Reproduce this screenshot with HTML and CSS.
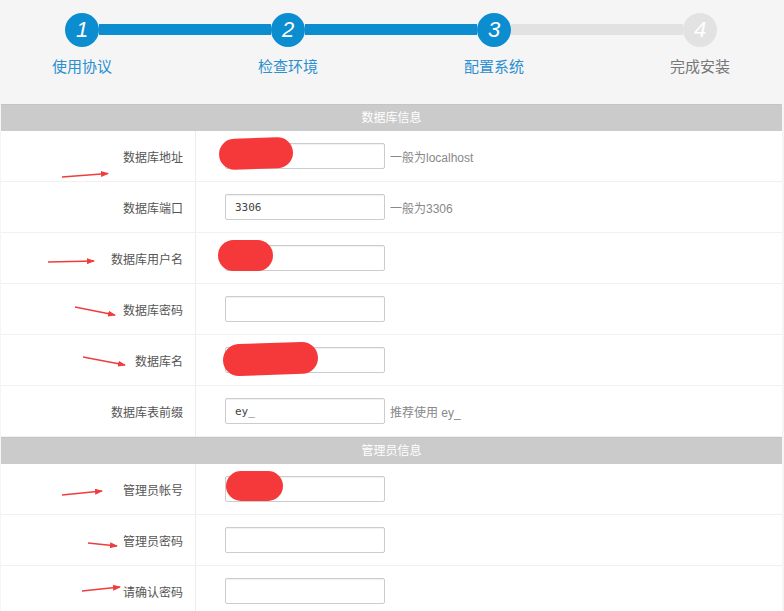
FILE: index.html
```html
<!DOCTYPE html>
<html lang="zh-CN">
<head>
    <meta charset="UTF-8">
    <meta name="viewport" content="width=device-width, initial-scale=1.0">
    <title>安装向导 - 配置系统</title>
    <link rel="stylesheet" href="styles.css">
</head>
<body>
<div class="page">

    <!-- install steps -->
    <div class="steps">
        <div class="step done">
            <span class="circle">1</span>
            <span class="step-label">使用协议</span>
        </div>
        <span class="bar done"></span>
        <div class="step done">
            <span class="circle">2</span>
            <span class="step-label">检查环境</span>
        </div>
        <span class="bar done"></span>
        <div class="step done">
            <span class="circle">3</span>
            <span class="step-label">配置系统</span>
        </div>
        <span class="bar"></span>
        <div class="step">
            <span class="circle">4</span>
            <span class="step-label">完成安装</span>
        </div>
    </div>

    <form class="setup">
        <div class="section">数据库信息</div>
        <div class="row">
            <label class="label" for="dbhost">数据库地址</label>
            <div class="field"><input class="text" type="text" id="dbhost"><span class="hint">一般为localhost</span></div>
        </div>
        <div class="row">
            <label class="label" for="dbport">数据库端口</label>
            <div class="field"><input class="text" type="text" id="dbport" value="3306"><span class="hint">一般为3306</span></div>
        </div>
        <div class="row">
            <label class="label" for="dbuser">数据库用户名</label>
            <div class="field"><input class="text" type="text" id="dbuser"></div>
        </div>
        <div class="row">
            <label class="label" for="dbpw">数据库密码</label>
            <div class="field"><input class="text" type="password" id="dbpw"></div>
        </div>
        <div class="row">
            <label class="label" for="dbname">数据库名</label>
            <div class="field"><input class="text" type="text" id="dbname"></div>
        </div>
        <div class="row">
            <label class="label" for="dbprefix">数据库表前缀</label>
            <div class="field"><input class="text" type="text" id="dbprefix" value="ey_"><span class="hint">推荐使用 ey_</span></div>
        </div>

        <div class="section">管理员信息</div>
        <div class="row">
            <label class="label" for="admin">管理员帐号</label>
            <div class="field"><input class="text" type="text" id="admin"></div>
        </div>
        <div class="row">
            <label class="label" for="adminpw">管理员密码</label>
            <div class="field"><input class="text" type="password" id="adminpw"></div>
        </div>
        <div class="row">
            <label class="label" for="adminpw2">请确认密码</label>
            <div class="field"><input class="text" type="password" id="adminpw2"></div>
        </div>
    </form>

    <!-- red marks drawn over the screenshot -->
    <svg class="marks" width="784" height="611" viewBox="0 0 784 611">
        <defs>
            <marker id="head" markerWidth="8" markerHeight="6" refX="7" refY="3" orient="auto" markerUnits="userSpaceOnUse">
                <path d="M0,0 L8,3 L0,6 Z" fill="#f03c3c"/>
            </marker>
        </defs>
        <g fill="#f5393a">
            <rect x="219" y="138" width="74" height="31" rx="15.5" transform="rotate(-2 256 153)"/>
            <rect x="218" y="240" width="55" height="31" rx="15.5"/>
            <rect x="223" y="343" width="95" height="32" rx="16" transform="rotate(-2 270 359)"/>
            <rect x="226" y="471" width="57" height="30" rx="15"/>
        </g>
        <g stroke="#f03c3c" stroke-width="1.4" marker-end="url(#head)">
            <line x1="62" y1="177" x2="108" y2="173.5"/>
            <line x1="48" y1="262" x2="94" y2="261"/>
            <line x1="75" y1="307" x2="115" y2="315"/>
            <line x1="83" y1="357" x2="125" y2="365"/>
            <line x1="62" y1="495" x2="102" y2="491"/>
            <line x1="88" y1="543" x2="117" y2="546"/>
            <line x1="82" y1="591" x2="120" y2="587"/>
        </g>
    </svg>

</div>
</body>
</html>
```

FILE: styles.css
```css
body {
    margin: 0;
    background-color: #f5f5f5;
    font-family: "Liberation Sans", "Noto Sans CJK SC", sans-serif;
    color: #333;
}

.page {
    position: relative;
    width: 784px;
    height: 611px;
    overflow: hidden;
}

/* steps */
.steps {
    display: flex;
    align-items: flex-start;
    height: 104px;
    box-sizing: border-box;
    padding: 13px 67px 0 65px;
}

.step {
    display: flex;
    flex-direction: column;
    align-items: center;
    width: 34px;
    color: #777;
}

.step.done {
    color: #2b8fd0;
}

.circle {
    width: 34px;
    height: 34px;
    border-radius: 50%;
    background-color: #e2e2e2;
    color: #fff;
    font: italic 22px/34px "Liberation Sans", sans-serif;
    text-align: center;
}

.step.done .circle {
    background-color: #0b8dd0;
}

.step-label {
    margin-top: 10px;
    font-size: 15px;
    line-height: 20px;
    white-space: nowrap;
}

.bar {
    flex: 1;
    height: 11px;
    margin-top: 11px;
    background-color: #e2e2e2;
}

.bar.done {
    background-color: #0b8dd0;
}

/* form */
.setup {
    margin: 0 2px 0 1px;
    background-color: #fff;
}

.section {
    height: 27px;
    line-height: 27px;
    box-sizing: border-box;
    border-top: 1px solid #c4c4c4;
    background-color: #cbcbcb;
    color: #fff;
    font-size: 12px;
    text-align: center;
}

.row {
    display: flex;
    height: 51px;
    box-sizing: border-box;
    border-bottom: 1px solid #f1f1f1;
}

.label {
    display: flex;
    align-items: center;
    justify-content: flex-end;
    width: 195px;
    box-sizing: border-box;
    padding-right: 12px;
    border-right: 1px solid #ececec;
    font-size: 12px;
    color: #555;
}

.field {
    display: flex;
    align-items: center;
    padding-left: 29px;
}

.text {
    width: 160px;
    height: 26px;
    box-sizing: border-box;
    padding: 0 9px;
    border: 1px solid #ccc;
    border-radius: 2px;
    box-shadow: inset 0 1px 1px rgba(0, 0, 0, 0.06);
    font: 11px "DejaVu Sans Mono", monospace;
    color: #444;
}

.hint {
    margin-left: 5px;
    font-size: 12px;
    color: #888;
}

.marks {
    position: absolute;
    left: 0;
    top: 0;
    pointer-events: none;
}
```
